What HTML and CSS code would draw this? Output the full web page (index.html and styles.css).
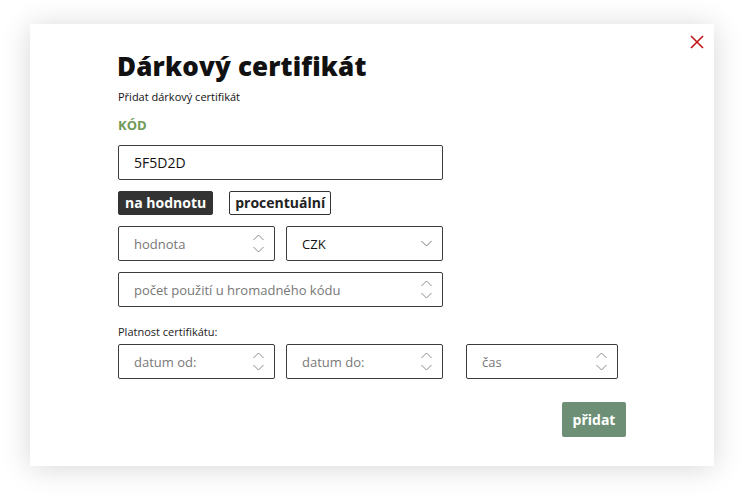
FILE: index.html
```html
<!DOCTYPE html>
<html lang="cs">
<head>
<meta charset="utf-8">
<title>Dárkový certifikát</title>
<link rel="stylesheet" href="styles.css">
</head>
<body>
<div class="modal">
  <button class="close" aria-label="Zavřít">
    <svg width="14" height="14" viewBox="0 0 14 14"><path d="M1 1L13 13M13 1L1 13" stroke="#c0141b" stroke-width="1.6" fill="none"/></svg>
  </button>
  <h1 class="title">Dárkový certifikát</h1>
  <p class="subtitle">Přidat dárkový certifikát</p>
  <div class="label-green">KÓD</div>
  <div class="field wide"><span class="value big">5F5D2D</span></div>
  <div class="toggles">
    <span class="toggle active">na hodnotu</span>
    <span class="toggle">procentuální</span>
  </div>
  <div class="row two">
    <div class="field"><span class="ph">hodnota</span><span class="spin"><svg width="11" height="19" viewBox="0 0 11 19"><path d="M0.5 6L5.5 1L10.5 6M0.5 13L5.5 18L10.5 13" stroke="#8a8a8a" stroke-width="1" fill="none"/></svg></span></div>
    <div class="field select"><span class="value">CZK</span><span class="caret"><svg width="11" height="7" viewBox="0 0 11 7"><path d="M0.5 1L5.5 6L10.5 1" stroke="#7a7a7a" stroke-width="1" fill="none"/></svg></span></div>
  </div>
  <div class="field wide"><span class="ph">počet použití u hromadného kódu</span><span class="spin"><svg width="11" height="19" viewBox="0 0 11 19"><path d="M0.5 6L5.5 1L10.5 6M0.5 13L5.5 18L10.5 13" stroke="#8a8a8a" stroke-width="1" fill="none"/></svg></span></div>
  <p class="small-label">Platnost certifikátu:</p>
  <div class="row dates">
    <div class="field"><span class="ph">datum od:</span><span class="spin"><svg width="11" height="19" viewBox="0 0 11 19"><path d="M0.5 6L5.5 1L10.5 6M0.5 13L5.5 18L10.5 13" stroke="#8a8a8a" stroke-width="1" fill="none"/></svg></span></div>
    <div class="field"><span class="ph">datum do:</span><span class="spin"><svg width="11" height="19" viewBox="0 0 11 19"><path d="M0.5 6L5.5 1L10.5 6M0.5 13L5.5 18L10.5 13" stroke="#8a8a8a" stroke-width="1" fill="none"/></svg></span></div>
    <div class="field time"><span class="ph">čas</span><span class="spin"><svg width="11" height="19" viewBox="0 0 11 19"><path d="M0.5 6L5.5 1L10.5 6M0.5 13L5.5 18L10.5 13" stroke="#8a8a8a" stroke-width="1" fill="none"/></svg></span></div>
  </div>
  <div class="actions"><button class="submit">přidat</button></div>
</div>
</body>
</html>
```

FILE: styles.css
```css
* { box-sizing: border-box; }
html, body { margin: 0; padding: 0; background: #fff; }
body {
  font-family: "Open Sans", "Noto Sans", sans-serif;
  color: #1a1a1a;
  width: 744px;
  height: 502px;
  overflow: hidden;
  padding: 24px 30px 36px 30px;
}
.modal {
  position: relative;
  background: #fff;
  width: 684px;
  height: 442px;
  box-shadow: 0 2px 28px rgba(0, 0, 0, 0.16);
  padding: 28px 88px 0 88px;
}
.close {
  position: absolute;
  top: 11px;
  right: 10px;
  width: 14px;
  height: 14px;
  border: 0;
  background: none;
  padding: 0;
  display: flex;
}
.title {
  margin: 0 0 0 -1px;
  font-size: 26px;
  line-height: 28px;
  font-weight: 800;
  color: #111;
  letter-spacing: 0.15px;
}
.subtitle {
  margin: 10px 0 0 0;
  font-size: 11px;
  line-height: 14px;
  color: #111;
}
.label-green {
  margin-top: 13px;
  font-size: 13px;
  line-height: 16px;
  font-weight: 700;
  color: #6f9a56;
}
.field {
  height: 35px;
  border: 1px solid #3d3d3d;
  border-radius: 2px;
  display: flex;
  align-items: center;
  justify-content: space-between;
  padding: 0 10px 0 15px;
  font-size: 13px;
  background: #fff;
}
.field.wide { width: 325px; }
.label-green + .field { margin-top: 12px; }
.value { color: #111; }
.value.big { font-size: 14px; }
.ph { color: #777; }
.spin { display: flex; align-items: center; }
.field.select { padding-right: 10px; }
.caret { display: flex; align-items: center; }
.toggles {
  display: flex;
  gap: 16px;
  margin-top: 11px;
}
.toggle {
  height: 24px;
  border: 1px solid #333;
  border-radius: 2px;
  font-size: 14px;
  font-weight: 700;
  line-height: 22px;
  padding: 0 5px;
  color: #222;
}
.toggle.active {
  background: #333;
  color: #fff;
  padding: 0 6px;
}
.row {
  display: flex;
}
.row.two { gap: 11px; width: 325px; margin-top: 11px; margin-bottom: 11px; }
.row.two .field { flex: 1; }
.small-label {
  margin: 18px 0 0 0;
  font-size: 11px;
  line-height: 14px;
  color: #222;
}
.row.dates { margin-top: 5px; gap: 11px; }
.row.dates .field { width: 157px; }
.row.dates .field.time { width: 152px; margin-left: 12px; }
.actions {
  display: flex;
  justify-content: flex-end;
  margin-top: 23px;
}
.submit {
  font-family: inherit;
  background: #6c8f76;
  color: #fff;
  border: 0;
  border-radius: 2px;
  height: 35px;
  width: 64px;
  font-size: 14px;
  font-weight: 700;
  padding: 0;
}
```
